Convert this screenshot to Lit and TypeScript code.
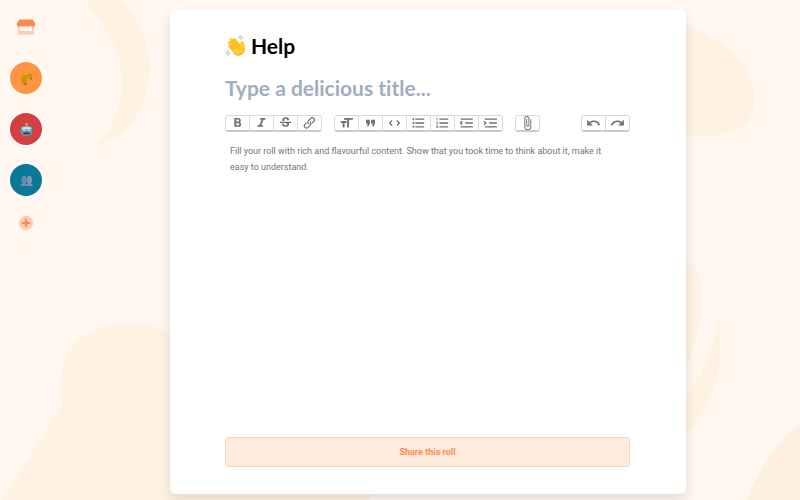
import { LitElement, html, css, svg } from "lit";
import { customElement, property } from "lit/decorators.js";

type Tool = { name: string; path: string };

const BOLD = "M15.6 10.79c.97-.67 1.65-1.77 1.65-2.79 0-2.26-1.75-4-4-4H7v14h7.04c2.09 0 3.71-1.7 3.71-3.79 0-1.52-.86-2.82-2.15-3.42zM10 6.5h3c.83 0 1.5.67 1.5 1.5s-.67 1.5-1.5 1.5h-3v-3zm3.5 9H10v-3h3.5c.83 0 1.5.67 1.5 1.5s-.67 1.5-1.5 1.5z";
const ITALIC = "M10 4v3h2.21l-3.42 8H6v3h8v-3h-2.21l3.42-8H18V4z";
const STRIKE = "M7.24 8.75c-.26-.48-.39-1.03-.39-1.67 0-.61.13-1.16.4-1.67.26-.5.63-.93 1.11-1.29.48-.35 1.05-.63 1.7-.83.66-.19 1.39-.29 2.18-.29.81 0 1.54.11 2.21.34.66.22 1.23.54 1.69.94.47.4.83.88 1.08 1.43s.38 1.15.38 1.81h-3.01c0-.31-.05-.59-.15-.85-.09-.27-.24-.49-.44-.68-.2-.19-.45-.33-.75-.44-.3-.1-.66-.16-1.06-.16-.39 0-.74.04-1.03.13s-.53.21-.72.36c-.19.16-.34.34-.44.55-.1.21-.15.43-.15.66 0 .48.25.88.74 1.21.38.25.77.48 1.41.7H7.39c-.05-.08-.11-.17-.15-.25zM21 12v-2H3v2h9.62c.18.07.4.14.55.2.37.17.66.34.87.51s.35.36.43.57c.07.2.11.43.11.69 0 .23-.05.45-.14.66-.09.2-.23.38-.42.53-.19.15-.42.26-.71.35-.29.08-.63.13-1.01.13-.43 0-.83-.04-1.18-.13s-.66-.23-.91-.42c-.25-.19-.45-.44-.59-.75s-.25-.76-.25-1.21H6.4c0 .55.08 1.13.24 1.58s.37.85.65 1.21c.28.35.6.66.98.92.37.26.78.48 1.22.65.44.17.9.3 1.38.39.48.08.96.13 1.44.13.8 0 1.53-.09 2.18-.28s1.21-.45 1.67-.79c.46-.34.82-.77 1.07-1.27s.38-1.07.38-1.71c0-.6-.1-1.14-.31-1.61-.05-.11-.11-.23-.17-.33H21z";
const LINK = "M9.88 13.7a4.3 4.3 0 0 1 0-6.07l3.37-3.37a4.26 4.26 0 0 1 6.07 0 4.3 4.3 0 0 1 0 6.06l-1.96 1.72a.91.91 0 1 1-1.3-1.3l1.97-1.71a2.46 2.46 0 0 0-3.48-3.48l-3.38 3.37a2.46 2.46 0 0 0 0 3.48.91.91 0 1 1-1.3 1.3zM4.25 19.46a4.3 4.3 0 0 1 0-6.07l1.93-1.9a.91.91 0 1 1 1.3 1.3l-1.93 1.9a2.46 2.46 0 0 0 3.48 3.48l3.37-3.38c.96-.96.96-2.52 0-3.48a.91.91 0 1 1 1.3-1.3 4.3 4.3 0 0 1 0 6.07l-3.38 3.38a4.26 4.26 0 0 1-6.07 0z";
const HEADING = "M12 9v3H9v7H6v-7H3V9h9zM8 4h14v3h-6v12h-3V7H8V4z";
const QUOTE = "M6 17h3l2-4V7H5v6h3zm8 0h3l2-4V7h-6v6h3z";
const CODE = "M18.2 12L15 15.2l1.4 1.4L21 12l-4.6-4.6L15 8.8l3.2 3.2zM5.8 12L9 8.8 7.6 7.4 3 12l4.6 4.6L9 15.2 5.8 12z";
const BULLETS = "M4 10.5c-.83 0-1.5.67-1.5 1.5s.67 1.5 1.5 1.5 1.5-.67 1.5-1.5-.67-1.5-1.5-1.5zm0-6c-.83 0-1.5.67-1.5 1.5S3.17 7.5 4 7.5 5.5 6.83 5.5 6 4.83 4.5 4 4.5zm0 12c-.83 0-1.5.68-1.5 1.5s.68 1.5 1.5 1.5 1.5-.68 1.5-1.5-.67-1.5-1.5-1.5zM7 19h14v-2H7v2zm0-6h14v-2H7v2zm0-8v2h14V5H7z";
const NUMBERS = "M2 17h2v.5H3v1h1v.5H2v1h3v-4H2v1zm1-9h1V4H2v1h1v3zm-1 3h1.8L2 13.1v.9h3v-1H3.2L5 10.9V10H2v1zm5-6v2h14V5H7zm0 14h14v-2H7v2zm0-6h14v-2H7v2z";
const OUTDENT = "M3 19h19v-2H3v2zm7-6h12v-2H10v2zm-8.3-.3l2.8 2.9L6 14.2 4 12l2-2-1.4-1.5L1 12l.7.7zM3 5v2h19V5H3z";
const INDENT = "M3 19h19v-2H3v2zm7-6h12v-2H10v2zm-6.9-1L1 14.2l1.4 1.4L6 12l-.7-.7-2.8-2.8L1 9.9 3.1 12zM3 5v2h19V5H3z";
const ATTACH = "M16.5 6v11.5a4 4 0 1 1-8 0V5a2.5 2.5 0 0 1 5 0v10.5a1 1 0 1 1-2 0V6H10v9.5a2.5 2.5 0 0 0 5 0V5a4 4 0 1 0-8 0v12.5a5.5 5.5 0 0 0 11 0V6h-1.5z";
const UNDO = "M12.5 8c-2.6 0-5 1-6.9 2.6L2 7v9h9l-3.6-3.6A8 8 0 0 1 20 16l2.4-.8a10.5 10.5 0 0 0-10-7.2z";
const REDO = "M18.4 10.6a10.5 10.5 0 0 0-16.9 4.6L4 16a8 8 0 0 1 12.7-3.6L13 16h9V7l-3.6 3.6z";

@customElement("tool-group")
class ToolGroup extends LitElement {
  @property({ attribute: false }) tools: Tool[] = [];

  static styles = css`
    :host {
      display: flex;
      box-sizing: border-box;
      height: 17px;
      border: 1px solid #d8d8d8;
      border-bottom: 2px solid #cccccc;
      border-radius: 3px;
      overflow: hidden;
    }
    .tool {
      display: grid;
      place-items: center;
      box-sizing: border-box;
      width: 23px;
      padding: 0;
      border: 0;
      background: #fff;
      color: #707070;
    }
    .tool + .tool {
      width: 24px;
      border-left: 1px solid #dcdcdc;
    }
    .icon {
      display: block;
      width: 15px;
      height: 14px;
      fill: currentColor;
    }
  `;

  render() {
    return this.tools.map(
      (tool) => html`
        <button class="tool" type="button" aria-label=${tool.name}>
          <svg class="icon" viewBox="1 1 22 22" aria-hidden="true"><path d=${tool.path}></path></svg>
        </button>
      `
    );
  }
}

const croissant = svg`
  <path d="M1 9c-.6-3 1-6.500 4.200-8C8-.3 11.500.2 13 2.500c1 1.300.9 3.300.1 4.700L11 6.300C9.600 5.500 8 6 7.500 7.500c-.4 1.500.2 3 .2 4.500L4 13.300C2.300 12.500 1.300 11 1 9z" fill="#d39b0c"/>
  <path d="M4.500 1.600l3 4M9 .6l.3 5M1.400 5.200l5 2.600M1.300 10.300l5.400-1.100M12.800 2.600l-2 3.600" stroke="#b5820c" stroke-width=".6" fill="none"/>
  <path d="M4.200 3c1.500-1.300 3.500-1.800 5.300-1.500" stroke="#efc02e" stroke-width="1.200" fill="none"/>
  <path d="M3.500 12.300l4-.4v1.300l-3.200.4z" fill="#8f6310"/>
  <path d="M11 6.300l2.300.9-1 1.300-2-1.200z" fill="#8a7040"/>`;

const robot = svg`
  <circle cx="7" cy="1.500" r="1.400" fill="#f0a63a"/>
  <path d="M6.400 2.500h1.200V4H6.400z" fill="#7c8d90"/>
  <rect x="0" y="5.500" width="14" height="4.500" rx="1.500" fill="#4d7f8e"/>
  <path d="M1 5.500c0-1.500 2.300-2.300 6-2.300s6 .8 6 2.300V10c0 2.600-2.300 3.800-6 3.800S1 12.600 1 10z" fill="#5fa3b3"/>
  <path d="M2 5c2.800-1.200 7.200-1.200 10 0v1.700H2z" fill="#c2e2e6"/>
  <circle cx="4.600" cy="7.400" r="1.500" fill="#dbe9e8"/>
  <circle cx="9.400" cy="7.400" r="1.500" fill="#dbe9e8"/>
  <circle cx="4.600" cy="7.400" r=".8" fill="#a9666a"/>
  <circle cx="9.400" cy="7.400" r=".8" fill="#a9666a"/>
  <path d="M7 7.500l.9 1.800H6.100z" fill="#c95450"/>
  <rect x="3.400" y="10.300" width="7.200" height="1.900" rx=".6" fill="#1d424b"/>`;

const people = svg`
  <path d="M.6 13c0-1.700 1.200-2.200 2.500-2.600C2 9.400 1.500 8 1.500 6.200 1.500 3.600 2.700 2 4.400 2s2.700 1.600 2.700 4.200c0 1.800-.3 3.200-1.300 4.200 1.200.4 2.200.9 2.200 2.600z" fill="#6c89b0"/>
  <path d="M6.300 13c0-1.700 1.200-2.200 2.500-2.600C7.800 9.400 7.400 8 7.400 6.200 7.400 3.600 8.500 2 10.200 2S13 3.600 13 6.200c0 1.800-.5 3.200-1.600 4.200 1.300.4 2.400.9 2.400 2.600z" fill="#7d94b9"/>`;

const TEAMS = [
  { name: "Bakery", tone: "orange", art: croissant },
  { name: "Robots", tone: "red", art: robot },
  { name: "People", tone: "teal", art: people },
];

@customElement("app-root")
class AppRoot extends LitElement {
  static styles = css`
    :host {
      position: relative;
      display: flex;
      box-sizing: border-box;
      min-height: 100vh;
      overflow: hidden;
      background: #fff7f0;
      font-family: Lato, "Liberation Sans", sans-serif;
    }
    .backdrop {
      position: absolute;
      inset: 0;
      width: 100%;
      height: 100%;
      fill: #fff2e3;
    }
    .backdrop .deep {
      fill: #fef0df;
    }
    .rail {
      position: relative;
      display: flex;
      flex-direction: column;
      align-items: center;
      flex: none;
      box-sizing: border-box;
      width: 52px;
      padding-top: 18px;
    }
    .rail svg {
      display: block;
    }
    .shop {
      margin-bottom: 24px;
    }
    .teams {
      display: flex;
      flex-direction: column;
      gap: 15px;
      margin: 0 0 17px;
      padding: 0;
      list-style: none;
    }
    .team {
      display: grid;
      place-items: center;
      width: 32px;
      height: 32px;
      border: 2px solid #fffdfb;
      border-radius: 50%;
    }
    .team svg {
      width: 13px;
      height: 13px;
    }
    .orange {
      background: #ff9544;
    }
    .red {
      background: #d53f41;
    }
    .teal {
      background: #0b7897;
    }
    .add {
      padding: 0;
      border: 0;
      background: none;
    }
    .main {
      position: relative;
      display: flex;
      justify-content: center;
      flex: 1;
      min-width: 0;
      padding: 9px 0 6px 4px;
    }
    .card {
      display: flex;
      flex-direction: column;
      box-sizing: border-box;
      width: 100%;
      max-width: 516px;
      padding: 24px 56px 27px 55px;
      border-radius: 5px;
      background: #fff;
      box-shadow: 0 6px 12px rgba(60, 40, 20, 0.13);
    }
    .heading {
      display: flex;
      align-items: center;
      gap: 4px;
      margin: 0 0 16px;
      font-size: 21px;
      line-height: 26px;
      font-weight: 700;
      color: #000;
    }
    .wave {
      flex: none;
      width: 22px;
      height: 22px;
    }
    .title {
      box-sizing: border-box;
      width: 100%;
      height: 26px;
      margin: 0 0 14px;
      padding: 0;
      border: 0;
      outline: 0;
      background: none;
      font: 700 21px/26px Lato, "Liberation Sans", sans-serif;
      font-variant-ligatures: none;
      color: #1a202c;
    }
    .title::placeholder {
      color: #a0aec0;
      opacity: 1;
    }
    .toolbar {
      display: flex;
      flex-wrap: wrap;
      gap: 12px;
    }
    .history {
      margin-left: auto;
    }
    .body {
      flex: 1;
      box-sizing: border-box;
      width: 100%;
      min-height: 96px;
      margin: 6px 0;
      padding: 5px 20px 5px 5px;
      border: 0;
      outline: 0;
      resize: none;
      background: none;
      font: 400 9px/16px Roboto, "Liberation Sans", sans-serif;
      color: #2d3748;
    }
    .body::placeholder {
      color: #757575;
      opacity: 1;
    }
    .share {
      height: 30px;
      padding: 0;
      border: 1px solid #ffd3b8;
      border-radius: 3px;
      background: #feebdc;
      font: 700 9px/16px Roboto, "Liberation Sans", sans-serif;
      color: #ff8a50;
    }
  `;

  render() {
    return html`
      <svg class="backdrop" viewBox="0 0 800 500" preserveAspectRatio="xMidYMid slice" aria-hidden="true">
        <path d="M85 0C108 34 122 48 122 84C122 106 112 130 97 144C115 145 150 115 150 68C150 38 134 16 122 0Z" />
        <path d="M2 500L57 413L62 406C56 375 62 325 128 324C145 324 157 327 170 331L370 400V500Z" />
        <path d="M660 18C715 27 755 65 755 98C755 128 730 136 708 136H660Z" />
        <path d="M680 250L697 270C703 300 704 335 680 378Z" />
        <path d="M718 314C716 340 704 378 680 404V440C715 408 727 360 718 314Z" />
        <path class="deep" d="M747 500C757 470 780 440 800 423V500Z" />
      </svg>

      <nav class="rail" aria-label="Teams">
        <a class="shop" href="#" aria-label="Shop">
          <svg width="20" height="18" viewBox="0 0 20 18">
            <path d="M2 7h16v9.500H2zM4 8v5h12V8z" fill="#ffcbb2" fill-rule="evenodd" />
            <path d="M3.500 1.500h13L19.200 5.500c.4 2-.7 3.300-2.200 3.300-1 0-1.800-.4-2.300-1-.6.600-1.400 1-2.400 1s-1.800-.4-2.300-1c-.5.600-1.300 1-2.300 1s-1.800-.4-2.400-1c-.5.600-1.300 1-2.300 1C1.500 8.800.4 7.500.8 5.500z" fill="#ff884d" />
          </svg>
        </a>
        <ul class="teams">
          ${TEAMS.map(
            (team) => html`
              <li>
                <a class="team ${team.tone}" href="#" aria-label=${team.name}>
                  <svg viewBox="0 0 14 14" aria-hidden="true">${team.art}</svg>
                </a>
              </li>
            `
          )}
        </ul>
        <button class="add" type="button" aria-label="Add a team">
          <svg width="16" height="16" viewBox="0 0 16 16">
            <circle cx="8" cy="8" r="7.200" fill="#ffcbb2" />
            <path d="M8 4.800v6.400M4.800 8h6.400" stroke="#ff884d" stroke-width="2.200" stroke-linecap="round" />
          </svg>
        </button>
      </nav>

      <main class="main">
        <form class="card">
          <h1 class="heading">
            <svg class="wave" viewBox="0 0 22 22" aria-hidden="true">
              <path d="M3.200 6.700c.8-.8 1.700-.6 2.400.1L4.800 5.500c-.6-1 0-1.900.8-2.200.8-.3 1.500 0 2 .7l.6.800c-.2-1 .4-1.700 1.100-1.900.8-.2 1.400.2 1.900.9l4.200 5.900c.2-1.600.1-3.200 1.500-3.700.9-.3 1.700.3 1.800 1.300.2 2.700 1.800 5.600 1 8.400-.7 2.600-2.800 4.500-5.400 4.700-2.200.2-3.900-.8-5.400-2.300l-5.300-5.400c-.7-.8-.6-1.700 0-2.200.3-.3.700-.4 1.100-.3L3.100 8.800c-.6-.8-.5-1.500.1-2.100z" fill="#ffcb2f" />
              <path d="M5.600 6.800l4.700 5M7.600 4.500l4.900 5.500M4.700 10.200l4 4M14.800 9.700c-1.700.8-2.200 2.200-1.600 4" stroke="#e79a17" stroke-width=".8" stroke-linecap="round" fill="none" />
              <path d="M8 17.500c2.500 3.200 6.500 3.300 9.200.5 1.300-1.400 1.800-3.200 1.600-5" stroke="#f2a51d" stroke-width="1" fill="none" />
              <path d="M13.500 2.200c1.200.3 2.200 1.100 2.700 2.200M15 .8c1.300.4 2.400 1.400 3 2.700M2.300 15.600c.4 1.200 1.200 2.100 2.400 2.600M.8 17.100c.6 1.300 1.500 2.300 2.800 2.900" stroke="#8d8d8d" stroke-width=".8" stroke-linecap="round" fill="none" />
            </svg>
            Help
          </h1>
          <input class="title" type="text" aria-label="Title" placeholder="Type a delicious title..." />
          <div class="toolbar" role="toolbar" aria-label="Formatting">
            <tool-group .tools=${[
              { name: "Bold", path: BOLD },
              { name: "Italic", path: ITALIC },
              { name: "Strikethrough", path: STRIKE },
              { name: "Link", path: LINK },
            ]}></tool-group>
            <tool-group .tools=${[
              { name: "Heading", path: HEADING },
              { name: "Quote", path: QUOTE },
              { name: "Code", path: CODE },
              { name: "Bullets", path: BULLETS },
              { name: "Numbers", path: NUMBERS },
              { name: "Decrease level", path: OUTDENT },
              { name: "Increase level", path: INDENT },
            ]}></tool-group>
            <tool-group .tools=${[{ name: "Attach files", path: ATTACH }]}></tool-group>
            <tool-group class="history" .tools=${[
              { name: "Undo", path: UNDO },
              { name: "Redo", path: REDO },
            ]}></tool-group>
          </div>
          <textarea
            class="body"
            aria-label="Content"
            placeholder="Fill your roll with rich and flavourful content. Show that you took time to think about it, make it easy to understand."
          ></textarea>
          <button class="share" type="button">Share this roll</button>
        </form>
      </main>
    `;
  }
}
